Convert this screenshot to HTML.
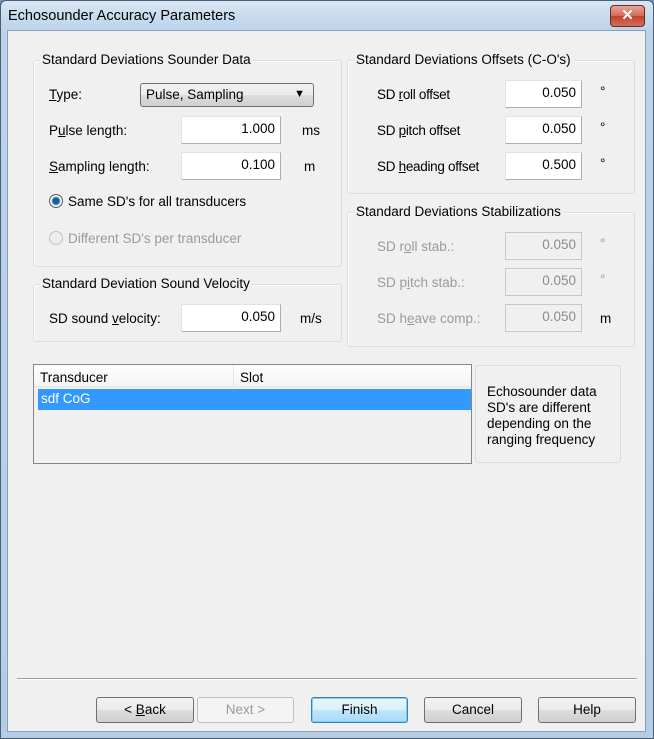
<!DOCTYPE html>
<html><head><style>
*{box-sizing:border-box;margin:0;padding:0}
body{width:654px;height:739px;background:#6d90b4;font-family:"Liberation Sans",sans-serif;font-size:13.5px;color:#000;position:relative;overflow:hidden}
.frame{position:absolute;left:0;top:0;width:654px;height:739px;background:linear-gradient(#d8e6f4,#bcd3ea 30px,#b4cce6);border:1px solid #4a5e74;border-radius:6px 6px 0 0}
.title{position:absolute;left:8px;top:8px;font-size:14.5px;color:#000}
.close{position:absolute;left:610px;top:5px;width:35px;height:22px;border:1px solid #6b2a22;border-radius:4px;background:linear-gradient(#e8a596,#d46a56 50%,#c2422c 51%,#d0705c);color:#fff;font-weight:bold;font-size:15px;text-align:center;line-height:20px}
.client{position:absolute;left:7px;top:30px;width:639px;height:702px;background:#f0f0f0;border:1px solid #8aa0b8}
.a{position:absolute;white-space:nowrap}
.grp{position:absolute;border:1px solid #dcdcdc;border-radius:3px;box-shadow:inset 1px 1px 0 #fff}
.gt{position:absolute;background:#f0f0f0;padding:0 2px;font-size:13.5px;white-space:nowrap}
.inp{position:absolute;background:#fff;border:1px solid #abadb3;border-top-color:#e3e3e3;border-left-color:#e2e3ea;text-align:right;padding:4px 5px 0 0;height:28px}
.dis{background:#f0f0f0;color:#8c8c8c;border:1px solid #c8c8c8}
.g{color:#9a9a9a}
.btn{position:absolute;top:697px;height:26px;border:1px solid #707070;border-radius:3px;background:linear-gradient(#f2f2f2,#ebebeb 50%,#dddddd 51%,#cfcfcf);text-align:center;line-height:24px;font-size:13.5px}
u{text-decoration:underline}
</style></head><body>
<div class="frame"></div>
<div class="title">Echosounder Accuracy Parameters</div>
<div class="close">✕</div>
<div class="client"></div>

<div class="grp" style="left:33px;top:60px;width:309px;height:207px"></div>
<div class="gt" style="left:40px;top:52px">Standard Deviations Sounder Data</div>
<div class="a" style="left:49px;top:87px"><u>T</u>ype:</div>
<div class="a" style="left:140px;top:83px;width:174px;height:24px;border:1px solid #707070;border-radius:3px;background:linear-gradient(#f2f2f2,#ebebeb 50%,#ddd 51%,#cfcfcf);padding:3px 0 0 5px">Pulse, Sampling<span style="position:absolute;right:8px;top:4px;font-size:11px">▼</span></div>
<div class="a" style="left:49px;top:123px">P<u>u</u>lse length:</div>
<div class="inp" style="left:181px;top:116px;width:100px">1.000</div>
<div class="a" style="left:302px;top:123px">ms</div>
<div class="a" style="left:49px;top:159px"><u>S</u>ampling length:</div>
<div class="inp" style="left:181px;top:152px;width:100px">0.100</div>
<div class="a" style="left:304px;top:159px">m</div>
<div class="a" style="left:49px;top:194px;width:14px;height:14px;border-radius:50%;border:1px solid #555;background:radial-gradient(circle,#1d5d9e 0,#1d5d9e 3px,#7bb3e0 4px,#fff 5px)"></div>
<div class="a" style="left:68px;top:194px">Same SD's for all transducers</div>
<div class="a" style="left:49px;top:231px;width:14px;height:14px;border-radius:50%;border:1px solid #c0c0c0;background:#eee"></div>
<div class="a g" style="left:68px;top:231px">Different SD's per transducer</div>

<div class="grp" style="left:33px;top:284px;width:309px;height:58px"></div>
<div class="gt" style="left:40px;top:276px">Standard Deviation Sound Velocity</div>
<div class="a" style="left:49px;top:311px">SD sound <u>v</u>elocity:</div>
<div class="inp" style="left:181px;top:304px;width:100px">0.050</div>
<div class="a" style="left:300px;top:311px">m/s</div>

<div class="grp" style="left:347px;top:60px;width:288px;height:134px"></div>
<div class="gt" style="left:354px;top:52px">Standard Deviations Offsets (C-O's)</div>
<div class="a" style="left:377px;top:87px;letter-spacing:-0.3px">SD <u>r</u>oll offset</div>
<div class="inp" style="left:505px;top:80px;width:77px">0.050</div>
<div class="a" style="left:600px;top:84px">°</div>
<div class="a" style="left:377px;top:123px;letter-spacing:-0.3px">SD <u>p</u>itch offset</div>
<div class="inp" style="left:505px;top:116px;width:77px">0.050</div>
<div class="a" style="left:600px;top:120px">°</div>
<div class="a" style="left:377px;top:159px;letter-spacing:-0.3px">SD <u>h</u>eading offset</div>
<div class="inp" style="left:505px;top:152px;width:77px">0.500</div>
<div class="a" style="left:600px;top:156px">°</div>

<div class="grp" style="left:347px;top:212px;width:288px;height:135px"></div>
<div class="gt" style="left:354px;top:204px">Standard Deviations Stabilizations</div>
<div class="a g" style="left:377px;top:239px">SD r<u>o</u>ll stab.:</div>
<div class="inp dis" style="left:505px;top:232px;width:77px">0.050</div>
<div class="a g" style="left:600px;top:236px">°</div>
<div class="a g" style="left:377px;top:275px">SD p<u>i</u>tch stab.:</div>
<div class="inp dis" style="left:505px;top:268px;width:77px">0.050</div>
<div class="a g" style="left:600px;top:272px">°</div>
<div class="a g" style="left:377px;top:311px">SD h<u>e</u>ave comp.:</div>
<div class="inp dis" style="left:505px;top:304px;width:77px">0.050</div>
<div class="a" style="left:600px;top:311px">m</div>

<div class="a" style="left:33px;top:364px;width:439px;height:100px;border:1px solid #828790;background:#f0f0f0"></div>
<div class="a" style="left:34px;top:365px;width:437px;height:22px;background:linear-gradient(#fff,#f4f4f4);border-bottom:1px solid #e5e5e5"></div>
<div class="a" style="left:233px;top:365px;width:1px;height:22px;background:#e5e5e5"></div>
<div class="a" style="left:40px;top:370px">Transducer</div>
<div class="a" style="left:240px;top:370px">Slot</div>
<div class="a" style="left:38px;top:389px;width:433px;height:21px;background:#3399ff;color:#fff;padding:2px 0 0 3px">sdf CoG</div>
<div class="a" style="left:475px;top:365px;width:146px;height:98px;border:1px solid #dcdcdc;border-radius:3px"></div>
<div class="a" style="left:487px;top:384px;line-height:16px">Echosounder data<br>SD's are different<br>depending on the<br>ranging frequency</div>

<div class="a" style="left:17px;top:678px;width:620px;height:1px;background:#a0a0a0;box-shadow:0 1px 0 #fff"></div>
<div class="btn" style="left:96px;width:98px">&lt; <u>B</u>ack</div>
<div class="btn" style="left:197px;width:97px;color:#9a9a9a;border-color:#c0c0c0;background:#f4f4f4">Next &gt;</div>
<div class="btn" style="left:311px;width:97px;border-color:#3c7fb1;background:linear-gradient(#eaf6fd,#d9f0fc 50%,#bee6fd 51%,#a7d9f5);box-shadow:inset 0 0 0 1px #7fd0f5">Finish</div>
<div class="btn" style="left:424px;width:98px">Cancel</div>
<div class="btn" style="left:538px;width:98px">Help</div>
</body></html>
